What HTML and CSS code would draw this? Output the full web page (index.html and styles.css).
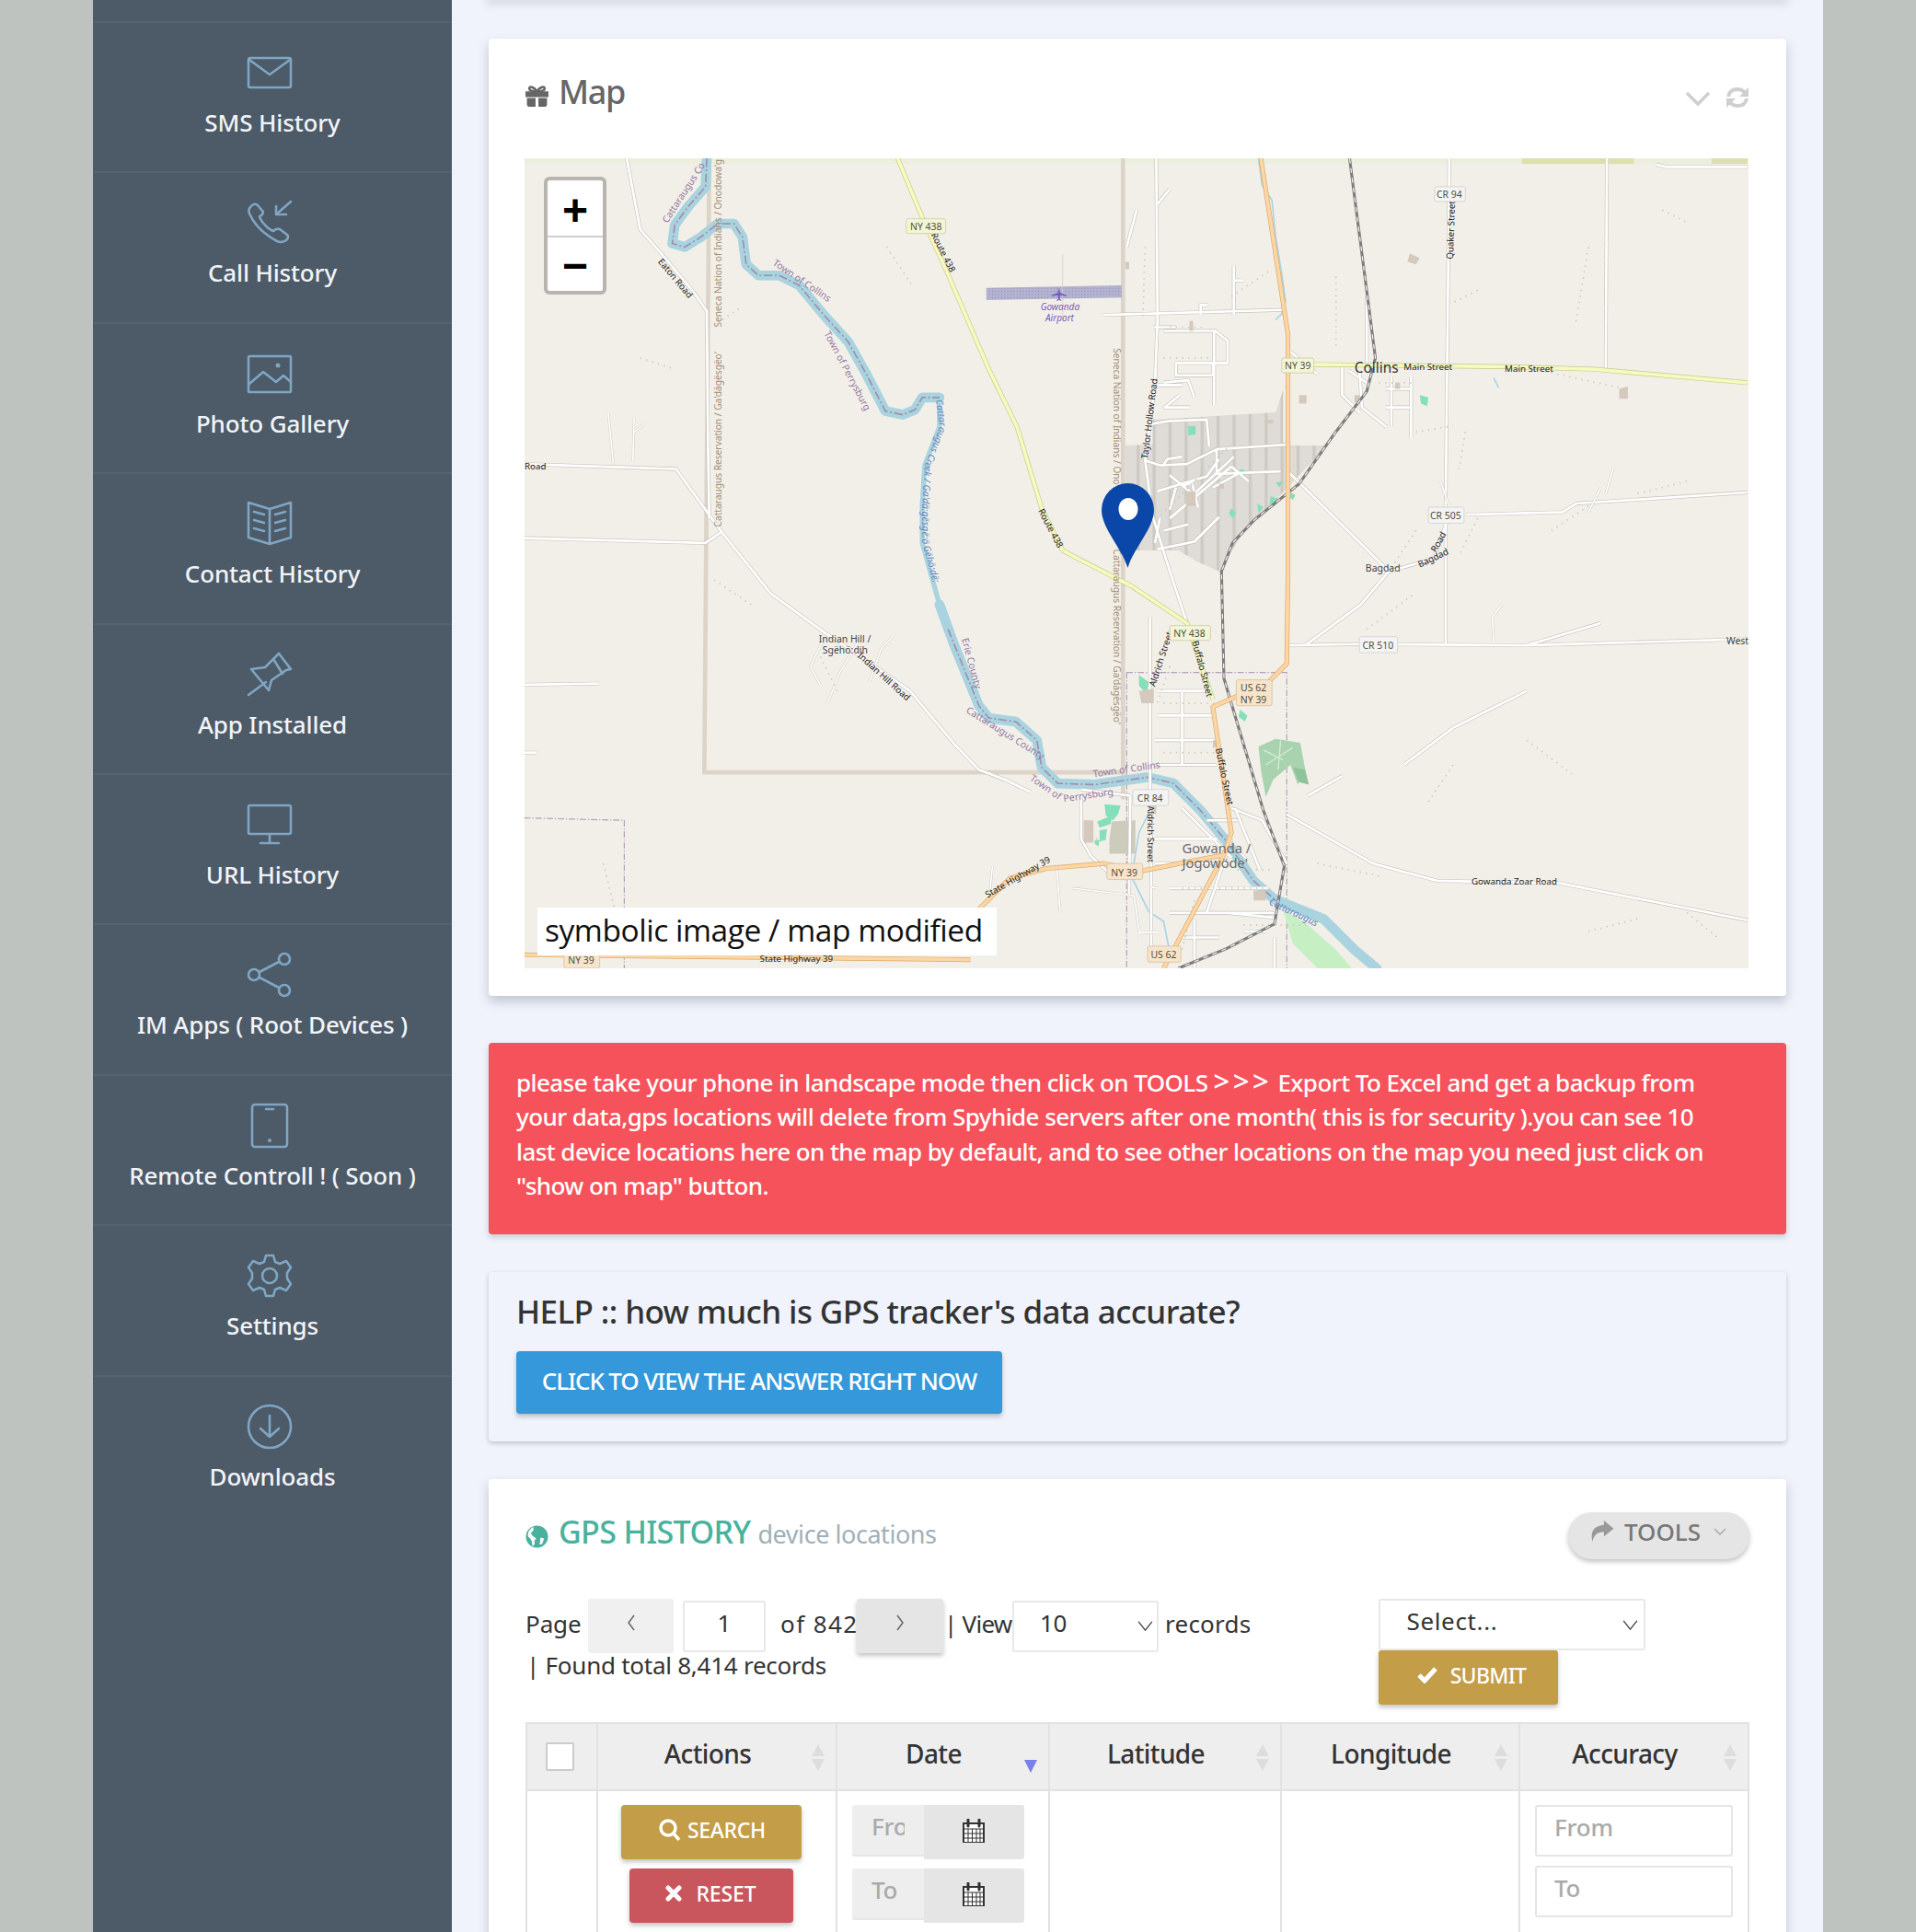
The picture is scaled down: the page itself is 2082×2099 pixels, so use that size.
FILE: index.html
```html
<!DOCTYPE html>
<html lang="en">
<head>
<meta charset="utf-8">
<title>GPS History</title>
<link rel="stylesheet" href="styles.css">
</head>
<body>
<div class="shell">
  <aside class="sidebar">
    <a class="nav-item">
      <svg class="nav-icon" viewBox="0 0 48 48"><rect x="1" y="8" width="46" height="32" rx="2"/><path d="M2 10l22 16 22-16"/></svg>
      <span>SMS History</span>
    </a>
    <a class="nav-item">
      <svg class="nav-icon" viewBox="0 0 48 48"><path d="M3 7c3-4 6-4 8-2l5 6c2 2 0 5-3 6 1 5 9 14 15 16 2-2 4-3 7-2l8 6c2 2 1 4-1 6-3 2-6 3-10 1C21 38 8 28 2 14c-1-3-1-5 1-7z"/><path d="M47 1L31 15M31 6v9h11"/></svg>
      <span>Call History</span>
    </a>
    <a class="nav-item">
      <svg class="nav-icon" viewBox="0 0 48 48"><rect x="1" y="5" width="46" height="39" rx="1"/><path d="M2 35l15-13 14 11 8-7 8 7"/><circle cx="33" cy="15" r="2.5" class="solid"/></svg>
      <span>Photo Gallery</span>
    </a>
    <a class="nav-item">
      <svg class="nav-icon" viewBox="0 0 48 48"><path d="M24 8L1 1v38l23 7 23-7V1zM24 8v38"/><path d="M7 11l11 3M7 20l11 3M7 29l11 3M41 11l-11 3M41 20l-11 3M41 29l-11 3"/></svg>
      <span>Contact History</span>
    </a>
    <a class="nav-item">
      <svg class="nav-icon" viewBox="0 0 48 48"><path d="M1 46l19-14M4 18l15-2 12-12 3-3 13 17-5 1-16 11-3 11z"/><path d="M28 7l10 16"/></svg>
      <span>App Installed</span>
    </a>
    <a class="nav-item">
      <svg class="nav-icon" viewBox="0 0 48 48"><rect x="1" y="3" width="46" height="31" rx="2"/><path d="M24 34v9M14 44h20"/></svg>
      <span>URL History</span>
    </a>
    <a class="nav-item">
      <svg class="nav-icon" viewBox="0 0 48 48"><circle cx="7" cy="24" r="6"/><circle cx="40" cy="7" r="6"/><circle cx="40" cy="41" r="6"/><path d="M13 21l21-11M13 27l21 11"/></svg>
      <span>IM Apps ( Root Devices )</span>
    </a>
    <a class="nav-item">
      <svg class="nav-icon" viewBox="0 0 48 48"><rect x="5" y="1" width="38" height="46" rx="3"/><path d="M20 6h8"/><circle cx="24" cy="40" r="2" class="solid"/></svg>
      <span>Remote Controll ! ( Soon )</span>
    </a>
    <a class="nav-item">
      <svg class="nav-icon" viewBox="0 0 48 48"><path d="M20 2h8l2 7 5 2 7-3 5 7-4 6v6l4 6-5 7-7-3-5 2-2 7h-8l-2-7-5-2-7 3-5-7 4-6v-6l-4-6 5-7 7 3 5-2z"/><circle cx="24" cy="24" r="8"/></svg>
      <span>Settings</span>
    </a>
    <a class="nav-item">
      <svg class="nav-icon" viewBox="0 0 48 48"><circle cx="24" cy="24" r="23"/><path d="M24 12v23M14 26l10 9 10-9"/></svg>
      <span>Downloads</span>
    </a>
  </aside>

  <main class="content">
    <div class="card-stub"></div>

    <section class="card map-card">
      <header class="card-head">
        <h2 class="card-title">
          <svg class="title-icon" viewBox="0 0 26 22"><path class="fill-grey" d="M1 6h24v6H1zM2.500 13h9v9h-7a2 2 0 0 1-2-2zM14.500 13h9v7a2 2 0 0 1-2 2h-7z"/><path class="gift-bow" d="M13 6C10 1 5 0 5 3c0 2 3 3 8 3zM13 6c3-5 8-6 8-3 0 2-3 3-8 3z"/></svg>
          Map
        </h2>
        <div class="card-tools">
          <svg class="tool-chevron" viewBox="0 0 28 16"><path d="M2 2l12 12L26 2"/></svg>
          <svg class="tool-refresh" viewBox="0 0 26 24"><path d="M3 11C4 5 8 3 13 3c4 0 7 2 9 5"/><path class="tip" d="M25 1v10H15z"/><path d="M23 13c-1 6-5 8-10 8-4 0-7-2-9-5"/><path class="tip" d="M1 23V13h10z"/></svg>
        </div>
      </header>

      <div class="map">
        <svg class="map-svg" viewBox="426 128 994 657" preserveAspectRatio="none">
          <defs>
            <g id="minor-roads">
              <path d="M509 128l11 58 16 18 27 32 11 16 1 108 1 60"/>
              <path d="M426 376l123 4 37 51 40 50 44 32 26 17 43 30 36 43 20 21 21 8 21 10"/>
              <path d="M426 436l147 4 13-9"/>
              <path d="M939 128l1 130-2 53-8 62 6 45 14 45 14 42"/>
              <path d="M896 255l145-4"/>
              <path d="M1177 128l-1 100-1 90-1 95M1175 423l-11 30-36 10-23 27-45 33"/>
              <path d="M1305 128l-1 171"/>
              <path d="M1191 417l78-2 11-7 139-9"/>
              <path d="M1045 523l60-1 135 1 179-5"/>
              <path d="M1046 382l82 81"/>
              <path d="M1345 133l8 2 66 0"/>
              <path d="M1174 413v110"/>
              <path d="M1240 560l-60 30-40 30M1240 523l60-18"/>
              <path d="M1045 660l70 40 52 14 100 2 152 30"/>
              <path d="M1000 655l25 10 20 35M1062 645l28-16"/>
              <path d="M878 640l40 5M918 645l-1 80M878 645v35l8 14 15 14M935 640v130"/>
              <path d="M960 655l40 40M938 680h50M938 700h60M950 720h80M950 740h85M1000 680l-20 60M980 665l25 0M1003 655l20 50"/>
              <path d="M996 740l40 4M1035 760v25M1010 755h20M970 745v40M990 760h-30"/>
              <path d="M940 560h40M940 580h48M938 600h48M938 620h50M960 560v60"/>
              <path d="M934 500v160"/>
              <path d="M930 373l12 4 22-1 24-12 60-4M988 364v20l52-2M940 398l40-12 10-14M970 400l32-30M950 420l50-42M965 425l-20 5M940 445l30-6 20-20M955 395l-5 18M950 385l22 18M942 420l-4 20"/>
              <path d="M932 344l18-3 30-1 2 22M944 378l4-6 12-2M960 394l8-3 5 20M1000 378l14 12M985 395l22-12"/>
              <path d="M945 268h42l10 8v18h-24M986 268v60M975 294h10v10h-30v-10h20M940 312h20M958 320l-12 10 20 0M955 265l-18 0M945 310l20-2 5 14"/>
              <path d="M975 255v-8h6M1002 255v-40M1002 227h8M915 200l8 -30M940 165l10 -12"/>
              <path d="M1048 285l22 18M1104 300l2 30 20 16M1090 295v25l15 15M1130 305v40M1146 305v50M1095 300l15 10M1125 315h20M1125 330h20"/>
              <path d="M426 555l60-1M426 610h10"/>
              <path d="M1110 240v60"/>
            </g>
            <g id="thin-roads">
              <path d="M494 335l4 40M515 338l-1 36M515 350l8-6"/>
              <path d="M706 553l10-28 10-10M700 515l-18 30-10 25M668 520l-10 20 8 15"/>
              <path d="M1220 490l-8 10 1 20M1170 390l6 18M1310 380l-6 20M1300 395l-10 20"/>
              <path d="M806 702l-3 30M858 700l3 40M871 720l50 6 5 35"/>
              <path d="M925 756h16M940 720l-5-1M1006 690l10 10"/>
            </g>
            <pattern id="stripes" width="13" height="10" patternUnits="userSpaceOnUse"><rect width="13" height="10" class="stripe-bg"/><rect x="0" width="2.500" height="10" class="stripe"/></pattern>
            <pattern id="runway" width="2.500" height="2.500" patternUnits="userSpaceOnUse"><rect width="2.500" height="2.500" class="runway-bg"/><circle cx="1" cy="1" r=".5" class="runway-dot"/></pattern>
            <path id="creek-line" d="M760 324l3 22-12 31-2 32 0 31 14 52"/>
          </defs>

          <rect x="426" y="128" width="994" height="657" class="m-bg"/>
          <rect x="426" y="128" width="994" height="4.500" class="m-strip"/>
          <path class="m-strip-dark" d="M1236 128h91v4.500h-91zM1390 128h29v4.500h-29z"/>

          <path class="m-landuse" d="M914 361l22-1 0-20 100-6 6-18v45h36l-38 40-30 30-20 32-18-8-15-9h-43z"/>
          <path class="m-boundary" d="M576 128l-4 498h341M912 128v520"/>
          <path class="m-admin" d="M426 663l81 2v120M915 545v240M915 545h130v240"/>

          <path class="m-green" d="M1022 605l14-6 20 3 4 22-6 12-6-16-14 12-6 14-4-22z"/>
          <path class="m-green-dark" d="M1050 622l10 2 3 12-8-2z"/>
          <path class="m-green-line" d="M1026 608l16 8M1028 620l22-14M1040 600l-2 24"/>
          <path class="m-park" d="M1042 738l18 10 25 22 13 15h-28l-20-20z"/>
          <path class="m-pond" d="M897 652l13 1-2 7-4 5-6-4zM891 666l12-5-1 7-9 3zM893 673l6-1-1 9-5 1zM889 681l4 0-1 5-3-2zM925 547l8 6-2 9-6-6zM1007 575l6 5-2 5-5-4z"/>
          <path class="m-teal" d="M965 345l6 0 0 7-6 1zM1007 380l4 1-1 4-4 0zM1021 408l5 3-4 5zM1042 390l-3 5-3-4zM1032 402l6 2-3 6-4-2zM1000 412l4 3-3 5-3-4zM1048 399l4 2-2 4-3-2zM1153 320l7 2-1 7-5-2z"/>
          <path class="m-pale" d="M903 666l19-1v27h-21v-12z"/>
          <path class="m-runway" d="M801 233l110-2v10l-110 2z"/>
          <path class="m-hair" d="M863 206v54"/>

          <path class="m-water-thin" d="M1022 128l3 22 8 12 3 30 5 30 3 22-3 10-5 5M935 655l-10 20-6 36 14 28 12 8 4 20M1213 306l4 8"/>
          <path class="m-water-b" d="M574 128l-1 23-14 16-11 15-2 15 10 3 13-8 14-11 13 0 7 11 3 22 10 9 17 0 16 8 20 24 20 22 14 25 16 31 14 3 10-4 6-10 14 0"/>
          <path class="m-water-s" d="M763 322v24l-12 31-2 32 0 31 14 50"/>
          <path class="m-water-b" d="M763 490l12 33 20 49 8 10 22 3 17 15 4 22 13 13 30 1 43-6 21 5 22 22 21 25 22 32 17 15 40 16 25 25 18 15"/>
          <path class="m-dashpurple" d="M574 128l-1 23-14 16-11 15-2 15 10 3 13-8 14-11 13 0 7 11 3 22 10 9 17 0 16 8 20 24 20 22 14 25 16 31 14 3 10-4 6-10 14 0"/>
          <path class="m-dashpurple" d="M770 510l25 62 8 10 22 3 17 15 4 22 13 13 30 1 43-6 21 5 22 22 21 25 22 32 17 15"/>

          <use href="#minor-roads" class="road-case"/>
          <use href="#minor-roads" class="road-fill"/>
          <use href="#thin-roads" class="road-thin-case"/>
          <use href="#thin-roads" class="road-thin"/>

          <path class="m-bldg-dash" d="M930 200l-2 60M945 290h40M950 265h30M1000 240l30-20M1085 280v-60M1120 310h30M1150 350l30-5M1190 350l-5 30M1290 200l-10 60M1200 235l-20 10M950 540l-10 30M945 570h50M945 610h48M945 650h-15M1005 705h30M960 720h70M970 730l-10 40M1010 750h60M1130 460l20-30M1200 420l-15 30M1290 410l-30 20M1250 300l70 15M1000 360l-60 60M720 200l20 30M600 250l-15 10M520 290l25 8M610 490l-30-20M680 560l-15-30M1110 510l40-30M1070 700l50 10M880 680h20M1350 170l20 10M1330 400l40-10M1240 600l40 30M1180 620l-20 30M490 700l10 40M1370 740l25 20M1290 755l40-10"/>
          <path class="m-bldg" d="M914 212h3v6h-3zM966 260h3v8h-3zM1055 320h6v7h-6zM1133 310h4v5h-4zM1315 315l7-2v10h-7zM1145 205l8 4-3 5-7-2zM1100 320h4v6h-4zM963 398h8v12h-8zM990 392h4v4h-4zM1028 340h6v3h-6zM925 560l12-2 0 12-10 0zM1018 722h10v8h-10zM935 650h4v10h-4zM985 600h4v6h-4zM880 665h8v18h-8z"/>

          <path class="m-rail-case" d="M1096 128l21 162-7 27-26 34-29 41-36 29-18 19-9 23 2 87 32 107 17 45-8 47-39 20-39 16"/>
          <path class="m-rail" d="M1096 128l21 162-7 27-26 34-29 41-36 29-18 19-9 23 2 87 32 107 17 45-8 47-39 20-39 16"/>

          <path class="road-y-case" d="M729 128l20 48 20 44 34 79 23 47 20 66 17 34 13 7 43 22 45 30 6 18 15 44"/>
          <path class="road-y" d="M729 128l20 48 20 44 34 79 23 47 20 66 17 34 13 7 43 22 45 30 6 18 15 44"/>
          <path class="road-y-case" d="M1046 295l176 2 72 2 125 11"/>
          <path class="road-y" d="M1046 295l176 2 72 2 125 11"/>
          <path class="road-o-case" d="M1024 128l22 143v192l-1 75-15 15-45 20 15 102-6 18-67 13-30-6-47 4-30 8-25 25M426 774l362 4M994 693l-49 92"/>
          <path class="road-o" d="M1024 128l22 143v192l-1 75-15 15-45 20 15 102-6 18-67 13-30-6-47 4-30 8-25 25M426 774l362 4M994 693l-49 92"/>

          <path class="m-plane" d="M860 233l1 4 5 2v1l-5-1-.5 3 1.500 1v.5l-2-.5-2 .5v-.5l1.500-1-.5-3-5 1v-1l5-2z"/>

          <g class="lbl-boundary">
            <text transform="translate(586 265) rotate(-90)">Seneca Nation of Indians / Onodowa'g</text>
            <text transform="translate(586 427) rotate(-90)">Cattaraugus Reservation / Ga'dägësgëo'</text>
            <text transform="translate(904 282) rotate(90)">Seneca Nation of Indians / Ono</text>
            <text transform="translate(904 445) rotate(90)">Cattaraugus Reservation / Ga'dägësgëo'</text>
          </g>
          <g class="lbl-admin">
            <text transform="translate(542 181) rotate(-57)">Cattaraugus Co</text>
            <text transform="translate(627 214) rotate(34)">Town of Collins</text>
            <text transform="translate(669 270) rotate(62)">Town of Perrysburg</text>
            <text transform="translate(781 518) rotate(75)">Erie County</text>
            <text transform="translate(784 577) rotate(32)">Cattaraugus County</text>
            <text transform="translate(888 630) rotate(-8)">Town of Collins</text>
            <text transform="translate(836 632) rotate(35)">Town of</text>
            <text transform="translate(864 650) rotate(-8)">Perrysburg</text>
          </g>
          <text class="lbl-creek"><textPath href="#creek-line">Cattaraugus Creek / Ga'dä:gësgë:ö Gëhö:dë:</textPath></text>
          <text class="lbl-creek" transform="translate(1030 733) rotate(25)">Cattaraugus</text>
          <g class="lbl-road">
            <text transform="translate(534 212) rotate(50)">Eaton Road</text>
            <text x="426" y="380">Road</text>
            <text transform="translate(756 190) rotate(63)">Route 438</text>
            <text transform="translate(843 414) rotate(62)">Route 438</text>
            <text transform="translate(932 372) rotate(-83)">Taylor Hollow Road</text>
            <text transform="translate(1180 210) rotate(-88)">Quaker Street</text>
            <text x="1140" y="300">Main Street</text>
            <text x="1222" y="301">Main Street</text>
            <text transform="translate(1153 460) rotate(-25)">Bagdad</text>
            <text transform="translate(1166 448) rotate(-60)">Road</text>
            <text transform="translate(696 532) rotate(42)">Indian Hill Road</text>
            <text transform="translate(938 557) rotate(-72)">Aldrich Street</text>
            <text transform="translate(968 520) rotate(75)">Buffalo Street</text>
            <text transform="translate(987 607) rotate(78)">Buffalo Street</text>
            <text transform="translate(932 653) rotate(90)">Aldrich Street</text>
            <text transform="translate(802 728) rotate(-30)">State Highway 39</text>
            <text x="617" y="780">State Highway 39</text>
            <text x="1195" y="717">Gowanda Zoar Road</text>
          </g>
          <g class="lbl-place">
            <text x="665" y="521">Indian Hill /</text>
            <text x="668" y="530">Sgëhö:dih</text>
            <text x="1109" y="463">Bagdad</text>
            <text x="1402" y="522">West</text>
          </g>
          <text class="lbl-town" x="1100" y="302">Collins</text>
          <text class="lbl-gowanda" x="960" y="692">Gowanda /</text>
          <text class="lbl-gowanda" x="960" y="704">Jogowöde'</text>
          <text class="lbl-airport" x="845" y="251">Gowanda</text>
          <text class="lbl-airport" x="849" y="260">Airport</text>

          <g class="shield-y">
            <rect x="736" y="177" width="32" height="12" rx="1.500"/><text x="752" y="186">NY 438</text>
            <rect x="1041" y="290" width="26" height="12" rx="1.500"/><text x="1054" y="299">NY 39</text>
            <rect x="950" y="507" width="33" height="12" rx="1.500"/><text x="966" y="516">NY 438</text>
          </g>
          <g class="shield-w">
            <rect x="1165" y="151" width="25" height="12" rx="1.500"/><text x="1177" y="160">CR 94</text>
            <rect x="1160" y="411" width="29" height="13" rx="1.500"/><text x="1174" y="421">CR 505</text>
            <rect x="1104" y="516" width="31" height="13" rx="1.500"/><text x="1119" y="526">CR 510</text>
            <rect x="920" y="640" width="29" height="13" rx="1.500"/><text x="934" y="650">CR 84</text>
          </g>
          <g class="shield-o">
            <rect x="1004" y="551" width="29" height="21" rx="1.500"/><text x="1018" y="560">US 62</text><text x="1018" y="570">NY 39</text>
            <rect x="899" y="700" width="29" height="13" rx="1.500"/><text x="913" y="710">NY 39</text>
            <rect x="932" y="767" width="27" height="13" rx="1.500"/><text x="945" y="777">US 62</text>
            <rect x="458" y="772" width="29" height="13" rx="1.500"/><text x="472" y="781">NY 39</text>
          </g>
        </svg>

        <div class="zoom-box">
          <span class="zoom-btn">+</span>
          <span class="zoom-btn zoom-minus">−</span>
        </div>
        <svg class="pin" viewBox="0 0 57 92"><path d="M28.500 92C22 70 0 49 0 29a28.500 29 0 0 1 57 0c0 20-22 41-28.500 63z"/><ellipse cx="29" cy="28" rx="10.500" ry="12" class="pin-hole"/></svg>
        <div class="map-note">symbolic image / map modified</div>
      </div>
    </section>

    <div class="alert">
      please take your phone in landscape mode then click on TOOLS <span class="arrows">&gt;&gt;&gt;</span> Export To Excel and get a backup from<br>
      your data,gps locations will delete from Spyhide servers after one month( this is for security ).you can see 10<br>
      last device locations here on the map by default, and to see other locations on the map you need just click on<br>
      "show on map" button.
    </div>

    <section class="help">
      <h3 class="help-title">HELP :: how much is GPS tracker's data accurate?</h3>
      <a class="btn btn-blue">CLICK TO VIEW THE ANSWER RIGHT NOW</a>
    </section>

    <section class="card gps-card">
      <header class="gps-head">
        <h2 class="gps-title">
          <svg class="globe" viewBox="0 0 26 26"><circle cx="13" cy="13" r="12.500"/><path class="globe-land" d="M9 2C5 4 2 8 3 13c2 1 3 3 4 5l1 6c2-1 3-3 2-6l2-3-4-3-2-3 3-3zM17 14l4 1-2 6-3 1z"/></svg>
          <span>GPS HISTORY</span>
          <small>device locations</small>
        </h2>
        <a class="tools-btn">
          <svg class="tools-share" viewBox="0 0 26 24"><path d="M15 0l11 9-11 9v-5C8 13 4 15 2 24-1 12 4 6 15 5z"/></svg>
          TOOLS
          <svg class="tools-caret" viewBox="0 0 14 8"><path d="M1 1l6 6 6-6"/></svg>
        </a>
      </header>

      <div class="controls">
        <div class="pager">
          <span class="lbl-page">Page</span>
          <a class="page-btn page-prev"><svg viewBox="0 0 10 18"><path d="M8 1L2 9l6 8"/></svg></a>
          <input class="page-input" value="1">
          <span class="lbl-of">of 842</span>
          <a class="page-btn page-next"><svg viewBox="0 0 10 18"><path d="M2 1l6 8-6 8"/></svg></a>
          <span class="lbl-view">| View</span>
          <div class="select select-view"><span>10</span><svg viewBox="0 0 18 12"><path d="M1 1l8 10 8-10"/></svg></div>
          <span class="lbl-records">records</span>
          <span class="lbl-total">| Found total 8,414 records</span>
        </div>
        <div class="bulk">
          <div class="select select-bulk"><span>Select...</span><svg viewBox="0 0 18 12"><path d="M1 1l8 10 8-10"/></svg></div>
          <a class="btn btn-gold btn-submit"><svg class="ico-check" viewBox="0 0 22 18"><path d="M2 9l6 6L20 2"/></svg>SUBMIT</a>
        </div>
      </div>

      <table class="grid">
        <colgroup><col class="c0"><col class="c1"><col class="c2"><col class="c3"><col class="c4"><col class="c5"></colgroup>
        <thead>
          <tr>
            <th class="th-check"><span class="checkbox"></span></th>
            <th class="sortable">Actions</th>
            <th class="sort-desc">Date</th>
            <th class="sortable">Latitude</th>
            <th class="sortable">Longitude</th>
            <th class="sortable">Accuracy</th>
          </tr>
        </thead>
        <tbody>
          <tr>
            <td></td>
            <td class="td-actions">
              <div class="actions">
                <a class="btn btn-gold btn-search"><svg class="ico-search" viewBox="0 0 24 24"><circle cx="10" cy="10" r="8"/><path d="M16 16l6 7"/></svg>SEARCH</a>
                <a class="btn btn-red btn-reset"><svg class="ico-x" viewBox="0 0 18 18"><path d="M3 3l12 12M15 3L3 15"/></svg>RESET</a>
              </div>
            </td>
            <td class="td-date">
              <div class="date-row"><input class="date-input" placeholder="From" readonly><span class="date-add"><svg class="ico-cal" viewBox="0 0 24 26"><path class="cal-body" d="M1 5h22v21H1z"/><path class="cal-grid" d="M2 11h20M2 16h20M2 21h20M6 11v14M10.500 11v14M15 11v14M19 11v14"/><path class="cal-ring" d="M6 1v7M18 1v7"/></svg></span></div>
              <div class="date-row"><input class="date-input" placeholder="To" readonly><span class="date-add"><svg class="ico-cal" viewBox="0 0 24 26"><path class="cal-body" d="M1 5h22v21H1z"/><path class="cal-grid" d="M2 11h20M2 16h20M2 21h20M6 11v14M10.500 11v14M15 11v14M19 11v14"/><path class="cal-ring" d="M6 1v7M18 1v7"/></svg></span></div>
            </td>
            <td></td>
            <td></td>
            <td class="td-range">
              <input class="range-input" placeholder="From" readonly>
              <input class="range-input" placeholder="To" readonly>
            </td>
          </tr>
        </tbody>
      </table>
    </section>
  </main>
</div>
</body>
</html>
```

FILE: styles.css
```css
* { box-sizing: border-box; }
html, body { margin: 0; height: 2099px; overflow: hidden; }
body { background: #bec3bf; font-family: "Noto Sans", "Open Sans", sans-serif; color: #333; }
a { display: inline-block; }
.shell { display: flex; margin: 0 101px; height: 2099px; }

/* Sidebar */
.sidebar { width: 390px; flex: none; background: #4d5a67; padding-top: 23px; }
.nav-item { display: flex; flex-direction: column; align-items: center; height: 163.400px; border-top: 2px solid #55636f; padding-top: 30px; color: #f1f4f8; font-size: 26px; font-weight: 500; line-height: 36px; letter-spacing: -.15px; }
.nav-item span { margin-top: 12px; white-space: nowrap; }
.nav-icon { width: 48px; height: 48px; margin-left: -6px; fill: none; stroke: #7fa6c4; stroke-width: 2.600; stroke-linejoin: round; stroke-linecap: round; overflow: visible; }
.nav-icon .solid { fill: #7fa6c4; stroke: none; }

/* Main column */
.content { width: 1490px; background: #f0f3fb; padding: 0 40px; display: flex; flex-direction: column; }
.card-stub { height: 0; flex: none; box-shadow: 0 1px 8px 2px rgba(90, 100, 120, .35); margin-bottom: 42px; }
.card { background: #fff; border-radius: 4px; box-shadow: 0 6px 12px rgba(70, 80, 100, .28); flex: none; }
.map-card { height: 1040px; padding: 0 40px 0 39px; margin-bottom: 51px; }
.card-head { height: 130px; display: flex; justify-content: space-between; }
.card-title { margin: 33px 0 0; display: flex; align-items: baseline; gap: 10px; font-size: 36px; line-height: 50px; font-weight: 500; color: #666; letter-spacing: -1.300px; }
.title-icon { width: 27px; height: 23px; transform: translateY(3px); }
.fill-grey { fill: #666; }
.gift-bow { fill: none; stroke: #666; stroke-width: 2.500; }
.card-tools { display: flex; gap: 16px; padding-top: 52px; align-items: flex-start; }
.tool-chevron { width: 28px; height: 16px; margin-top: 5px; fill: none; stroke: #cfcfcf; stroke-width: 3.500; }
.tool-refresh { width: 26px; height: 24px; fill: none; stroke: #cfcfcf; stroke-width: 4; }
.tool-refresh .tip { fill: #cfcfcf; stroke: none; }

/* Map */
.map { position: relative; width: 1330px; height: 880px; overflow: hidden; }
.map-svg { display: block; width: 1330px; height: 880px; }
.m-bg { fill: #f2efe9; }
.m-strip { fill: #ecefdc; }
.m-strip-dark { fill: #dde0ae; }
.m-landuse { fill: url(#stripes); }
.stripe-bg { fill: #dfdcd7; }
.stripe { fill: #cdcac4; }
.m-boundary { fill: none; stroke: #dcd4c8; stroke-width: 3.500; }
.m-admin { fill: none; stroke: #b59fbe; stroke-width: .9; stroke-dasharray: 5 1.500 1 1.500; }
.m-green { fill: #a8d3ae; }
.m-green-dark { fill: #8fc49a; }
.m-green-line { fill: none; stroke: #d4ecd6; stroke-width: 1; }
.m-park { fill: #c6f0c4; }
.m-pond, .m-teal { fill: #84dfbb; }
.m-pale { fill: #cdcbbc; }
.m-runway { fill: url(#runway); }
.runway-bg { fill: #b4b4d2; }
.runway-dot { fill: #8d8daf; }
.m-hair { fill: none; stroke: #cfcfcf; stroke-width: .6; }
.m-water-thin { fill: none; stroke: #a6d4e4; stroke-width: 1.200; }
.m-water-b { fill: none; stroke: #a9d3df; stroke-width: 8; stroke-linejoin: round; stroke-linecap: round; }
.m-water-s { fill: none; stroke: #a9d3df; stroke-width: 4; stroke-linejoin: round; }
.m-dashpurple { fill: none; stroke: #a08cab; stroke-width: 1.200; stroke-dasharray: 7 2 1.500 2; }
.road-case { fill: none; stroke: #c4c1ba; stroke-width: 2.900; stroke-linejoin: round; }
.road-fill { fill: none; stroke: #fff; stroke-width: 2; stroke-linejoin: round; }
.road-thin-case { fill: none; stroke: #d0cdc6; stroke-width: 2; stroke-linejoin: round; }
.road-thin { fill: none; stroke: #fff; stroke-width: 1.200; stroke-linejoin: round; }
.m-bldg-dash { fill: none; stroke: #cfc6b9; stroke-width: 1.300; stroke-dasharray: 1 4; }
.m-bldg { fill: #d5c9bd; }
.m-rail-case { fill: none; stroke: #7c7c7c; stroke-width: 2.300; }
.m-rail { fill: none; stroke: #f2efe9; stroke-width: .9; stroke-dasharray: 4 4; }
.road-y-case { fill: none; stroke: #c5c98c; stroke-width: 3.800; stroke-linejoin: round; }
.road-y { fill: none; stroke: #f7fabf; stroke-width: 2.800; stroke-linejoin: round; }
.road-o-case { fill: none; stroke: #dba867; stroke-width: 3.800; stroke-linejoin: round; }
.road-o { fill: none; stroke: #fcd6a4; stroke-width: 2.800; stroke-linejoin: round; }
.m-plane { fill: #7b5cc0; }
.map-svg text { font-family: "Noto Sans", sans-serif; }
.lbl-boundary text { font-size: 7.600px; fill: #a48f74; }
.lbl-admin text { font-size: 7.800px; fill: #94799f; }
.lbl-creek { font-size: 7.800px; fill: #5f86c0; font-style: italic; }
.lbl-road text { font-size: 7.300px; fill: #222; }
.lbl-place text { font-size: 7.800px; fill: #444; }
.lbl-town { font-size: 11.500px; fill: #333; }
.lbl-gowanda { font-size: 11px; fill: #6b6b6b; }
.lbl-airport { font-size: 7.500px; fill: #7b5cc0; font-style: italic; }
.shield-y rect { fill: #f3f5d8; stroke: #c9cc9c; stroke-width: .6; }
.shield-w rect { fill: #f4f4f4; stroke: #cfcfcf; stroke-width: .6; }
.shield-o rect { fill: #f7e4ca; stroke: #d8bf9d; stroke-width: .6; }
.shield-y text, .shield-w text, .shield-o text { font-size: 7.800px; text-anchor: middle; fill: #50503c; }
.zoom-box { position: absolute; left: 21px; top: 20px; width: 68px; height: 128px; border: 4px solid #b8b5b1; border-radius: 6px; background: #fff; display: flex; flex-direction: column; }
.zoom-btn { flex: 1; display: flex; align-items: center; justify-content: center; font: 700 48px/1 "Liberation Sans", sans-serif; color: #000; padding-top: 6px; }
.zoom-minus { border-top: 2px solid #cfcfcf; padding-top: 4px; }
.pin { position: absolute; left: 627px; top: 353px; width: 57px; height: 92px; fill: #0b47a8; }
.pin-hole { fill: #fff; }
.map-note { position: absolute; left: 14px; top: 814px; width: 499px; height: 52px; background: #fff; padding-left: 8px; font: 400 33.500px/49px "Open Sans", sans-serif; letter-spacing: -.45px; color: #111; white-space: nowrap; }

/* Alert */
.alert { flex: none; height: 208px; background: #f6525b; border-radius: 4px; padding: 25px 30px 0; box-shadow: 0 3px 6px rgba(70, 80, 100, .25); color: #fff; font-size: 26px; line-height: 37.400px; font-weight: 500; letter-spacing: -.58px; white-space: nowrap; margin-bottom: 41px; }
.arrows { font-size: 31px; letter-spacing: 3.500px; line-height: 1; }

/* Help */
.help { flex: none; height: 184px; background: #f0f3fb; border-radius: 4px; padding: 20px 30px 0; box-shadow: 0 2px 5px rgba(70, 80, 100, .3); margin-bottom: 41px; }
.help-title { margin: 0; font-size: 35px; line-height: 46px; font-weight: 500; letter-spacing: -.6px; color: #333; }
.btn { color: #fff; border-radius: 4px; text-align: center; box-shadow: 0 3px 5px rgba(60, 60, 60, .3); white-space: nowrap; }
.btn-blue { display: block; margin-top: 20px; width: 528px; height: 68px; background: #3498db; font-size: 26px; line-height: 64px; font-weight: 500; letter-spacing: -1.120px; }
.btn-gold { background: #c39d47; }
.btn-red { background: #c9565c; }

/* GPS card */
.gps-card { height: 700px; padding: 0 40px 0 40px; }
.gps-head { height: 130px; display: flex; justify-content: space-between; align-items: flex-start; }
.gps-title { margin: 32px 0 0; display: flex; align-items: baseline; font-size: 34px; line-height: 50px; font-weight: 500; color: #48b29e; letter-spacing: -.65px; white-space: nowrap; }
.gps-title small { font-size: 27px; font-weight: 400; color: #9fb0b8; letter-spacing: -.45px; margin-left: 8px; }
.globe { width: 25px; height: 25px; margin-right: 11px; transform: translateY(5px); }
.globe circle { fill: #48b29e; }
.globe-land { fill: #fff; }
.tools-btn { margin-top: 36px; width: 197px; height: 51px; border-radius: 26px; background: #e5e5e5; box-shadow: 0 3px 5px rgba(60, 60, 60, .3); display: flex; align-items: center; padding: 0 0 10px 24px; font-size: 26px; font-weight: 500; color: #777; }
.tools-share { width: 26px; height: 23px; fill: #999; margin-right: 11px; }
.tools-caret { width: 14px; height: 8px; margin-left: 14px; fill: none; stroke: #aaa; stroke-width: 1.500; }

.controls { display: flex; height: 134px; }
.pager { width: 927px; flex: none; display: flex; flex-wrap: wrap; align-items: center; align-content: flex-start; font-size: 26px; letter-spacing: -.4px; color: #333; }
.lbl-page, .lbl-of, .lbl-view, .lbl-records { margin-bottom: 6px; }
.lbl-page { width: 68px; letter-spacing: -.1px; }
.page-btn { display: flex; align-items: center; justify-content: center; height: 59px; border-radius: 3px; }
.page-btn svg { width: 10px; height: 18px; margin-top: -8px; fill: none; stroke: #666; stroke-width: 1.500; }
.page-prev { width: 93px; background: #f0f0f0; }
.page-next { width: 94px; background: #e5e5e5; box-shadow: 0 3px 5px rgba(60, 60, 60, .3); }
.page-input { width: 90px; height: 56px; margin: 0 16px 0 10px; border: 2px solid #e8e8e8; border-radius: 3px; text-align: center; font: inherit; color: #333; padding: 0 0 8px; outline: none; }
.lbl-of { width: 83px; white-space: nowrap; letter-spacing: 1.400px; }
.lbl-view { width: 75px; padding-left: 1px; white-space: nowrap; letter-spacing: -.75px; }
.select { position: relative; height: 56px; border: 2px solid #e8e8e8; border-radius: 3px; background: #fff; display: flex; align-items: center; justify-content: space-between; }
.select span { padding-bottom: 8px; }
.select svg { width: 17px; height: 11px; fill: none; stroke: #444; stroke-width: 1.500; }
.select-view { width: 159px; padding: 0 4px 0 28px; }
.lbl-records { margin-left: 7px; letter-spacing: .25px; }
.lbl-total { width: 100%; margin-top: -6px; padding-left: 1px; line-height: 38px; white-space: nowrap; letter-spacing: -.25px; }
.bulk { margin-left: -0.500px; width: 290px; display: flex; flex-direction: column; align-items: flex-start; font-size: 26px; }
.select-bulk { width: 290px; padding: 0 6px 0 29px; letter-spacing: .65px; }
.btn-submit { width: 195px; height: 59px; border-radius: 3px; display: flex; align-items: center; justify-content: center; gap: 14px; font-size: 23px; font-weight: 500; letter-spacing: -.7px; padding: 0 0 6px 8px; }
.ico-check { width: 22px; height: 18px; fill: none; stroke: #fff; stroke-width: 5; }

/* Table */
.grid { table-layout: fixed; border-collapse: collapse; width: 1328px; }
.c0 { width: 77px; } .c1 { width: 260px; } .c2 { width: 231px; } .c3 { width: 252px; } .c4 { width: 259px; } .c5 { width: 249px; }
.grid th, .grid td { border: 2px solid #e2e2e2; padding: 0; }
.grid th { height: 73px; background: #eee; font-size: 28px; font-weight: 500; letter-spacing: -.6px; color: #333; position: relative; padding-right: 20px; padding-bottom: 8px; }
.grid .th-check { padding: 0 5px 7px 0; }
.checkbox { display: inline-block; width: 31px; height: 31px; background: #fff; border: 2px solid #ccc; border-radius: 2px; vertical-align: middle; }
.sortable::before, .sortable::after { content: ""; position: absolute; right: 12px; border-left: 7px solid transparent; border-right: 7px solid transparent; }
.sortable::before { top: 22px; border-bottom: 13px solid #ddd; }
.sortable::after { top: 38px; border-top: 13px solid #ddd; }
.sort-desc::after { content: ""; position: absolute; right: 12px; top: 39px; border-left: 7.500px solid transparent; border-right: 7.500px solid transparent; border-top: 14px solid #7a80e8; }
.grid td { height: 160px; vertical-align: top; }
.actions { display: flex; flex-direction: column; align-items: center; gap: 10px; padding: 15px 13px 0 0; }
.btn-search { width: 196px; height: 59px; display: flex; align-items: center; justify-content: center; gap: 7px; font-size: 23px; font-weight: 500; letter-spacing: -.3px; padding: 0 0 6px 3px; }
.btn-reset { width: 178px; height: 59px; display: flex; align-items: center; justify-content: center; gap: 15px; font-size: 23px; font-weight: 500; letter-spacing: -.1px; padding-bottom: 6px; }
.ico-search { width: 24px; height: 24px; fill: none; stroke: #fff; stroke-width: 3.500; }
.ico-x { width: 18px; height: 18px; fill: none; stroke: #fff; stroke-width: 5; stroke-linecap: round; }
.grid .td-date { padding: 15px 0 0 16px; }
.date-row { display: flex; align-items: flex-start; margin-bottom: 10px; }
.date-input { width: 78px; height: 56px; background: #eee; border: none; border-bottom: 2px solid #e5e5e5; border-radius: 3px 0 0 3px; padding: 0 21px 8px 21px; font: 500 26px "Noto Sans", sans-serif; letter-spacing: -.2px; outline: none; }
.date-input::placeholder, .range-input::placeholder { color: #aaa; opacity: 1; }
.date-add { width: 109px; height: 59px; background: #e5e5e5; border-radius: 0 3px 3px 0; display: flex; align-items: center; justify-content: center; padding: 0 2px 4px 0; }
.ico-cal { width: 24px; height: 26px; }
.cal-body { fill: #fff; stroke: #333; stroke-width: 2; }
.cal-grid { fill: none; stroke: #333; stroke-width: 1; }
.cal-ring { fill: none; stroke: #333; stroke-width: 3; stroke-linecap: round; }
.grid .td-range { padding: 15px 0 0 16px; }
.range-input { display: block; width: 215px; height: 56px; margin-bottom: 10px; background: #fff; border: 2px solid #e5e5e5; border-radius: 3px; padding: 0 20px 8px 19px; font: 500 26px "Noto Sans", sans-serif; letter-spacing: -.2px; outline: none; }
```
